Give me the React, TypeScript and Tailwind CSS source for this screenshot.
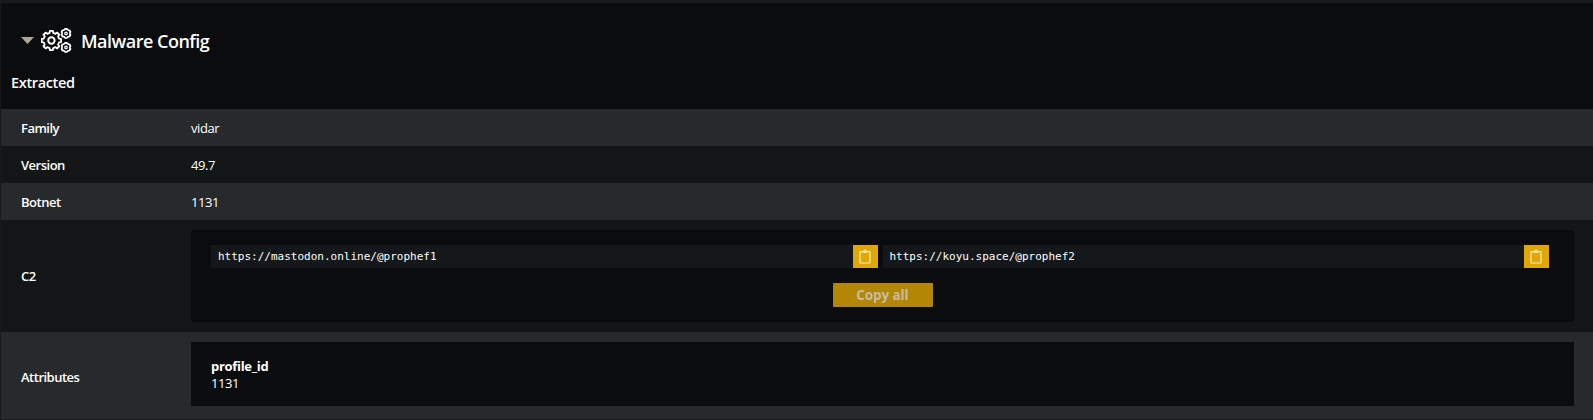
import type { ReactNode } from "react";

function gearPath(cx: number, cy: number, teeth: number, outer: number, inner: number) {
  const step = (Math.PI * 2) / teeth;
  const points: string[] = [];
  for (let i = 0; i < teeth; i++) {
    const a = i * step - Math.PI / 2;
    const corners: [number, number][] = [
      [-0.29, inner],
      [-0.2, outer],
      [0.2, outer],
      [0.29, inner],
    ];
    for (const [offset, r] of corners) {
      const t = a + offset * step;
      points.push(`${(cx + r * Math.cos(t)).toFixed(2)} ${(cy + r * Math.sin(t)).toFixed(2)}`);
    }
  }
  return `M${points.join("L")}Z`;
}

const bigGear = gearPath(10.4, 12.5, 8, 9.8, 7.9);
const topGear = gearPath(25, 5.4, 6, 4.7, 4.1);
const bottomGear = gearPath(25, 19.4, 6, 4.7, 4.1);

function GearsIcon() {
  return (
    <svg className="h-[25px] w-8 shrink-0" viewBox="0 0 32 25" fill="none" stroke="#fff" strokeLinejoin="round">
      <path d={bigGear} strokeWidth="1.8" />
      <circle cx="10.4" cy="12.5" r="3.2" strokeWidth="2" />
      <path d={topGear} strokeWidth="1.7" />
      <circle cx="25" cy="5.4" r="1.2" strokeWidth="1.3" />
      <path d={bottomGear} strokeWidth="1.7" />
      <circle cx="25" cy="19.4" r="1.2" strokeWidth="1.3" />
    </svg>
  );
}

function ClipboardIcon() {
  return (
    <svg className="h-[15px] w-3" viewBox="0 0 12 15" fill="none" stroke="#f8e9b4">
      <rect x="1" y="2.5" width="10" height="11.5" rx="0.8" strokeWidth="1.2" />
      <path d="M3.5 2.5h5v1h-5z" fill="#f8e9b4" strokeWidth="0.6" />
      <circle cx="6" cy="1.9" r="1.1" strokeWidth="1" />
    </svg>
  );
}

function Row({ label, shade, children }: { label: string; shade: string; children: ReactNode }) {
  return (
    <div className={`flex pl-5 pr-[19px] ${shade}`}>
      <div className="w-[170px] shrink-0 self-center pt-[2px] text-[13px] font-semibold tracking-[-0.5px]">{label}</div>
      {children}
    </div>
  );
}

function Value({ children }: { children: ReactNode }) {
  return <span className="self-center pt-[2px] text-[13px] tracking-[-0.4px]">{children}</span>;
}

function Endpoint({ url }: { url: string }) {
  return (
    <div className="flex h-[23px] min-w-0 flex-1">
      <div className="flex flex-1 items-center bg-[#15181a] pl-[7px] pt-[2px] font-['DejaVu_Sans_Mono',monospace] text-[11px]">
        {url}
      </div>
      <button className="flex w-[25px] items-center justify-center bg-[#e0a806] pb-px pr-px" aria-label="Copy">
        <ClipboardIcon />
      </button>
    </div>
  );
}

export default function App() {
  return (
    <main className="h-[420px] w-full overflow-hidden border-b border-l border-t-[3px] border-b-[#17191b] border-l-[#17191b] border-t-[#17191b] bg-[#0a0c0d] font-['Open_Sans',sans-serif] text-white">
      <header className="flex h-[106px] flex-col">
        <div className="flex items-center pl-5 pt-[25px]">
          <svg className="mr-[7px] h-[7px] w-[13px]" viewBox="0 0 13 7">
            <path d="M0 0h13L6.5 7z" fill="#b0a695" />
          </svg>
          <GearsIcon />
          <h1 className="ml-2 pt-px text-[18px] font-semibold leading-6 tracking-[-0.5px]">Malware Config</h1>
        </div>
        <h2 className="mt-5 pl-[10px] text-[14.5px] font-semibold leading-5 tracking-[-0.35px]">Extracted</h2>
      </header>
      <Row label="Family" shade="h-[37px] bg-[#262a2d]">
        <Value>vidar</Value>
      </Row>
      <Row label="Version" shade="h-[37px] bg-[#131617]">
        <Value>49.7</Value>
      </Row>
      <Row label="Botnet" shade="h-[37px] bg-[#262a2d]">
        <Value>1131</Value>
      </Row>
      <Row label="C2" shade="h-[112px] bg-[#131617]">
        <div className="mt-[10px] flex h-[92px] flex-1 flex-col items-center bg-[#0a0c0d] pl-5 pr-[25px] pt-[15px]">
          <div className="flex w-full gap-[5px]">
            <Endpoint url="https://mastodon.online/@prophef1" />
            <Endpoint url="https://koyu.space/@prophef2" />
          </div>
          <button className="ml-[5px] mt-[15px] h-6 w-[100px] rounded-[1px] bg-[#b38605] text-[13.5px] font-bold leading-6 tracking-[-0.1px] text-[#c6bda3]">
            Copy all
          </button>
        </div>
      </Row>
      <Row label="Attributes" shade="h-[87px] bg-[#262a2d] [&>:first-child]:pt-[5px]">
        <div className="mt-[10px] flex h-16 flex-1 flex-col justify-center bg-[#0a0c0d] pl-5 pt-[2px] text-[13px] leading-[17px]">
          <strong className="font-bold tracking-[-0.3px]">profile_id</strong>
          <span className="tracking-[-0.4px]">1131</span>
        </div>
      </Row>
    </main>
  );
}
